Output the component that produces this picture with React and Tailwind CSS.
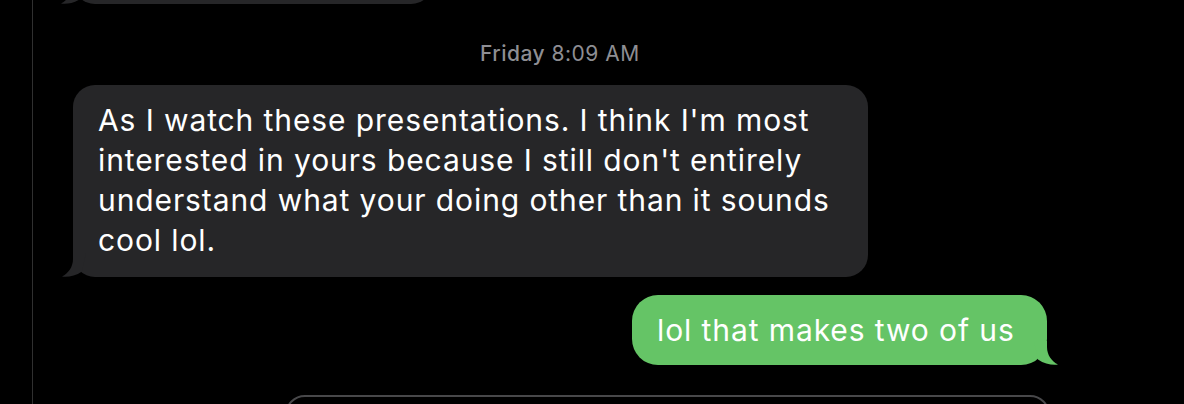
import React from "react";

function TailLeft({ color, className }) {
  return (
    <svg
      className={className}
      width="30"
      height="24"
      viewBox="0 0 30 24"
      fill={color}
    >
      <path d="M11 0 L11 6 C11 14 6.5 20 0 23.6 C6 24.4 13.5 23 20 18.5 L24 0 Z" />
    </svg>
  );
}

export default function App() {
  const font = { fontFamily: "Inter, 'Noto Sans', sans-serif" };
  return (
    <div
      className="w-[1184px] h-[404px] bg-black overflow-hidden flex items-start"
      style={font}
    >
      <div className="w-[32px] shrink-0" />
      <div className="w-px h-[404px] shrink-0 bg-[#303030]" />
      <div className="w-[1151px] shrink-0 flex flex-col">
        {/* partial bubble at top */}
        <div className="relative shrink-0 ml-[40px] w-[360px] h-[60px] -mt-[56px] bg-[#262628] rounded-[22px]">
          <TailLeft color="#262628" className="absolute -left-[12px] bottom-0" />
        </div>

        {/* timestamp */}
        <div className="shrink-0 mt-[36px] ml-[447px] h-[28px] leading-[28px] text-[21px] tracking-[0.5px] text-[#8e8e93] whitespace-nowrap">
          <span className="font-medium">Friday</span> 8:09 AM
        </div>

        {/* received bubble */}
        <div className="relative shrink-0 mt-[17px] ml-[40px] w-[795px] bg-[#262628] rounded-[22px] px-[25px] pt-[15px] pb-[17px] text-white text-[30px] leading-[40px] tracking-[0.9px] whitespace-nowrap">
          As I watch these presentations. I think I'm most
          <br />
          interested in yours because I still don't entirely
          <br />
          understand what your doing other than it sounds
          <br />
          cool lol.
          <TailLeft color="#262628" className="absolute -left-[11px] bottom-0" />
        </div>

        {/* sent bubble */}
        <div className="relative shrink-0 mt-[18px] self-end mr-[137px] w-[415px] h-[70px] bg-[#65c466] rounded-[26px] px-[25px] py-[15px] text-white text-[30px] leading-[40px] tracking-[0.9px] whitespace-nowrap">
          lol that makes two of us
          <TailLeft color="#65c466" className="absolute -right-[11px] bottom-0 -scale-x-100" />
        </div>

        {/* input */}
        <div className="shrink-0 mt-[30px] ml-[252px] w-[765px] h-[44px] border-2 border-[#48484a] rounded-[20px]" />
      </div>
    </div>
  );
}
